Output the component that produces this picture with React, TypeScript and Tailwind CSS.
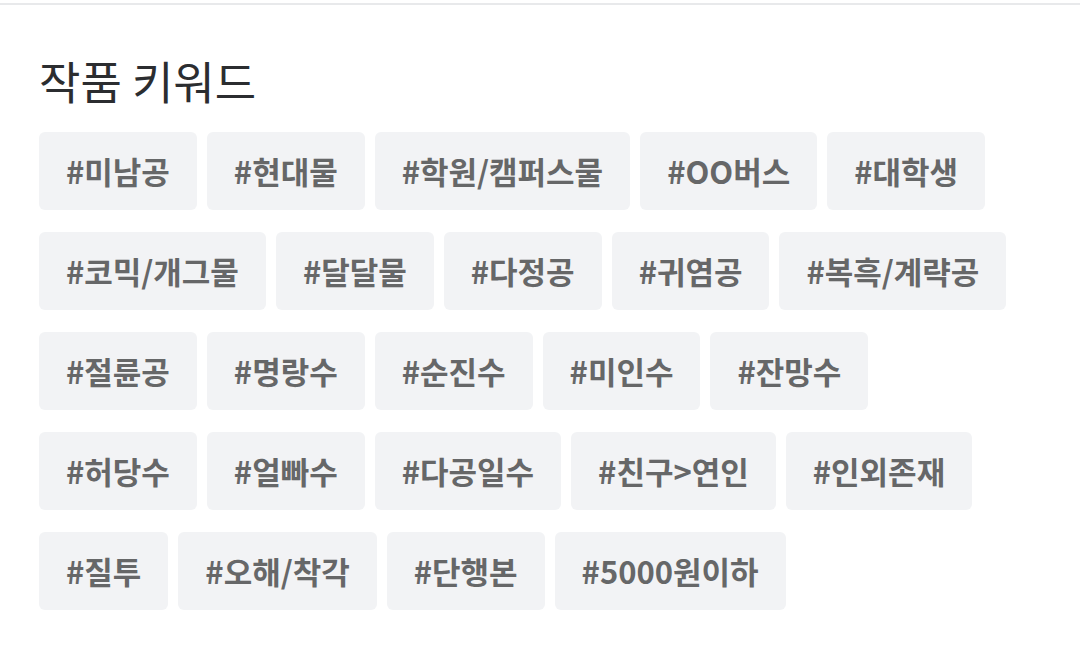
import React from "react";

const keywords = [
  "미남공", "현대물", "학원/캠퍼스물", "OO버스", "대학생",
  "코믹/개그물", "달달물", "다정공", "귀염공", "복흑/계략공",
  "절륜공", "명랑수", "순진수", "미인수", "잔망수",
  "허당수", "얼빠수", "다공일수", "친구>연인", "인외존재",
  "질투", "오해/착각", "단행본", "5000원이하",
];

const App: React.FC = () => {
  return (
    <div className="min-h-[646px] bg-white font-['Noto_Sans_CJK_KR','Noto_Sans',sans-serif]">
      <div className="h-[3px]" />
      <div className="border-t-2 border-[#e8e9eb] px-[39px] pt-[50px]">
        <h2 className="text-[45px] leading-[52px] font-normal text-[#2b2d30]">작품 키워드</h2>
        <div className="mt-[25px] flex flex-wrap gap-x-[10px] gap-y-[22px] pr-[20px]">
          {keywords.map((k) => (
            <span
              key={k}
              className="flex h-[78px] items-center rounded-[6px] bg-[#f2f3f5] px-[27px] text-[31px] font-bold text-[#666768]"
            >
              #{k}
            </span>
          ))}
        </div>
      </div>
    </div>
  );
};

export default App;
